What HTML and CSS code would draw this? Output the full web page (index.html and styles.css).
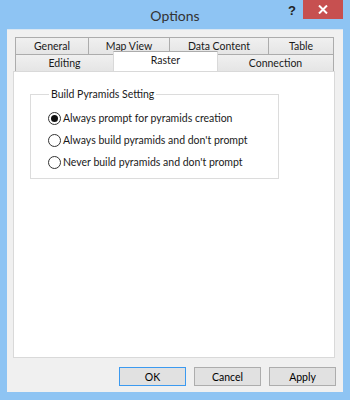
FILE: index.html
```html
<!DOCTYPE html>
<html lang="en">
<head>
  <meta charset="UTF-8" />
  <title>Options</title>
  <link rel="stylesheet" href="styles.css">
</head>
<body>
<div class="window">
  <div class="titlebar">
    <div></div>
    <div class="title">Options</div>
    <div class="controls">
      <span class="help">?</span>
      <span class="close">
        <svg width="10" height="9" viewBox="0 0 10 9"><path d="M1 0.5 L9 8.5 M9 0.5 L1 8.5" stroke="#fff" stroke-width="2"/></svg>
      </span>
    </div>
  </div>
  <div class="client">
    <div class="tabs">
      <div class="tab-row">
        <div class="tab" style="width:74px">General</div>
        <div class="tab" style="width:82px">Map View</div>
        <div class="tab" style="width:100px">Data Content</div>
        <div class="tab" style="width:66px">Table</div>
      </div>
      <div class="tab-row">
        <div class="tab" style="width:99px">Editing</div>
        <div class="tab selected" style="width:105px">Raster</div>
        <div class="tab" style="width:117px">Connection</div>
      </div>
    </div>
    <div class="panel">
      <fieldset class="group">
        <legend>Build Pyramids Setting</legend>
        <label class="radio"><span class="dot checked"></span>Always prompt for pyramids creation</label>
        <label class="radio"><span class="dot"></span>Always build pyramids and don't prompt</label>
        <label class="radio"><span class="dot"></span>Never build pyramids and don't prompt</label>
      </fieldset>
    </div>
    <div class="buttons">
      <button class="btn default">OK</button>
      <button class="btn">Cancel</button>
      <button class="btn">Apply</button>
    </div>
  </div>
</div>
</body>
</html>
```

FILE: styles.css
```css
body {
  margin: 0;
  padding: 0;
  font-family: 'Lato', 'Liberation Sans', sans-serif;
  font-size: 10.5px;
  color: #1a1a1a;
}
.window {
  width: 350px;
  height: 400px;
  background-color: #8ec4f3;
  display: flex;
  flex-direction: column;
}
.titlebar {
  height: 29px;
  display: grid;
  grid-template-columns: 1fr auto 1fr;
  padding: 0 7px;
}
.title {
  font-size: 14px;
  color: #333;
  line-height: 29px;
  padding-top: 1px;
}
.controls {
  display: flex;
  justify-content: flex-end;
  align-items: flex-start;
}
.help {
  font-family: 'Liberation Sans', sans-serif;
  font-weight: bold;
  font-size: 13px;
  color: #222;
  margin: 3px 7px 0 0;
}
.close {
  width: 40px;
  height: 19px;
  background-color: #c75050;
  display: flex;
  align-items: center;
  justify-content: center;
}
.client {
  flex: 1;
  margin: 0 7px 8px 7px;
  background-color: #f0f0f0;
  border-top: 1px solid #d8e6f2;
  padding: 7px 7px 0 6px;
  display: flex;
  flex-direction: column;
}
.tabs {
  margin-left: 2px;
  width: 320px;
}
.tab-row {
  display: flex;
  height: 17px;
}
.tab {
  box-sizing: border-box;
  height: 17px;
  border: 1px solid #acacac;
  border-bottom: none;
  background: linear-gradient(#f0f0f0, #e5e5e5);
  text-align: center;
  line-height: 16px;
  margin-right: -1px;
  white-space: nowrap;
}
.tab-row + .tab-row .tab {
  border-top: 1px solid #acacac;
}
.tab.selected {
  background: #fff;
  height: 20px;
  margin-top: -3px;
  position: relative;
  z-index: 1;
  line-height: 17px;
  border-color: #d9d9d9;
}
.panel {
  box-sizing: border-box;
  width: 322px;
  height: 287px;
  background-color: #fff;
  border: 1px solid #d9d9d9;
  padding: 15px 0 0 16px;
}
.group {
  box-sizing: border-box;
  width: 249px;
  height: 92px;
  margin: 0;
  border: 1px solid #dcdcdc;
  padding: 6px 0 0 17px;
}
.group legend {
  padding: 0 2px;
  margin-left: 1px;
  line-height: 14px;
}
.radio {
  display: flex;
  align-items: center;
  height: 22px;
  white-space: nowrap;
}
.dot {
  box-sizing: border-box;
  flex: none;
  width: 13px;
  height: 13px;
  border: 1px solid #333;
  border-radius: 50%;
  background: #fff;
  margin-right: 2px;
  display: flex;
  align-items: center;
  justify-content: center;
}
.dot.checked::after {
  content: "";
  width: 7px;
  height: 7px;
  border-radius: 50%;
  background: #111;
}
.buttons {
  display: flex;
  justify-content: flex-end;
  gap: 8px;
  margin-top: 9px;
  width: 323px;
}
.btn {
  box-sizing: border-box;
  width: 67px;
  height: 19px;
  padding: 0;
  font-family: inherit;
  font-size: 10.5px;
  background-color: #e1e1e1;
  border: 1px solid #adadad;
  color: #000;
}
.btn.default {
  border-color: #3c9af0;
}
```
